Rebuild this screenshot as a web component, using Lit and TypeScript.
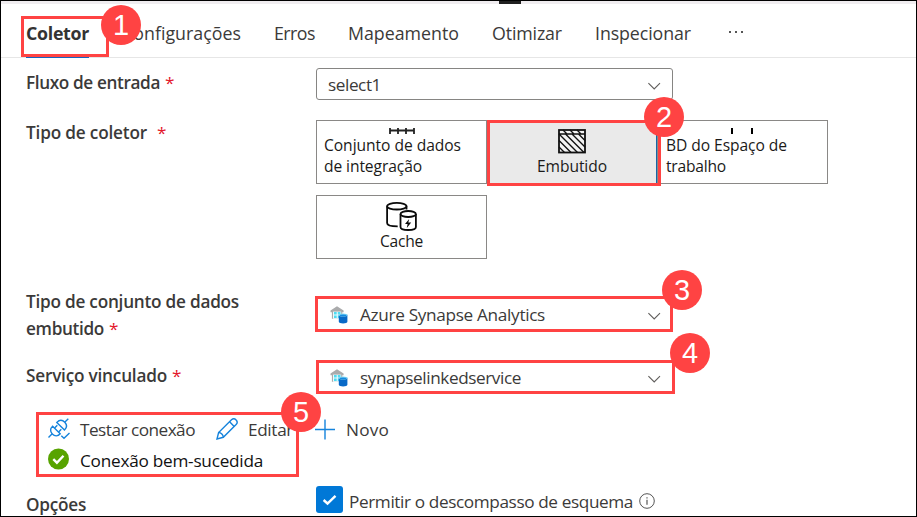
import { LitElement, html, css } from "lit";
import { customElement, property, query } from "lit/decorators.js";

/** Text run whose tracking is adjusted so that it spans a given advance width. */
@customElement("fit-text")
class FitText extends LitElement {
  @property({ type: Number }) w = 0;
  @query("span") run!: HTMLSpanElement;
  static styles = css`
    :host { display: inline-block; white-space: pre; flex: none; }
    span { display: inline-block; }
  `;
  render() {
    return html`<span><slot></slot></span>`;
  }
  firstUpdated() {
    const n = (this.textContent || "").length;
    const natural = this.run.getBoundingClientRect().width;
    if (n > 0 && this.w) this.run.style.letterSpacing = `${(this.w - natural) / n}px`;
  }
}

const chevron = html`<svg class="chevron" width="14" height="9" viewBox="0 0 14 9"><path d="M1.4 1.2L7.2 7L13 1.2" fill="none" stroke="#605e5c" stroke-width="1.1"/></svg>`;

const synapse = html`<svg class="synapse" width="18" height="18" viewBox="0 0 18 18">
  <path d="M.5 4.6L7 .3L13.6 4.6V6.3H12.3V12.8H1.9V6.3H.5Z" fill="#aaabac"/>
  <path d="M3 5.6H11.2V12.8H3Z" fill="#eefafd"/>
  <path d="M4 6H6.7V8.5H4ZM7.8 6H10.5V8.5H7.8ZM4 9.6H6.7V12.1H4ZM7.8 9.6H10.5V12.1H7.8Z" fill="#50dcf2"/>
  <path d="M8.8 8.8V15.7C8.8 18 17.4 18 17.4 15.7V8.8Z" fill="#0869c7"/>
  <ellipse cx="13.1" cy="8.9" rx="4.3" ry="1.5" fill="#83d9f5"/>
  <ellipse cx="13.1" cy="9.3" rx="3.5" ry=".9" fill="#168be1"/>
</svg>`;

const datasetIcon = html`<svg width="26" height="6" viewBox="0 0 26 6"><path d="M1 0V6M9 0V6M17 0V6M25 0V6M1 2.5H25" stroke="#222" stroke-width="1.8" fill="none"/></svg>`;

const hatchIcon = html`<svg width="28" height="25" viewBox="0 0 28 25">
  <rect x="1" y="1" width="26" height="22.5" fill="#f3f3f3" stroke="#111" stroke-width="1.8"/>
  <path d="M1 5H27M5 1L9 5M12 1L16 5M19 1L23 5M1 18L6.5 23.5M1 11.5L13 23.5M1 5L19.5 23.5M7.5 5L26 23.5M14 5L27 18M20.5 5L27 11.5" fill="none" stroke="#111" stroke-width="1.4"/>
</svg>`;

const cacheIcon = html`<svg width="31" height="29" viewBox="0 0 31 29" fill="none" stroke="#0a0a0a" stroke-width="1.8">
  <ellipse cx="10.8" cy="4.2" rx="9.7" ry="3.3"/>
  <path d="M1.1 4.2V21C1.1 23 5 24.4 11.7 24.4M20.5 4.2V7.5"/>
  <ellipse cx="22.2" cy="12" rx="7.7" ry="3"/>
  <path d="M14.5 12V25C14.5 29 29.9 29 29.9 25V12"/>
  <path d="M23.2 17L19 22H21.6L20.8 26L25.2 20.6H22.3Z" fill="#0a0a0a" stroke="none"/>
</svg>`;

const workspaceIcon = html`<svg width="22" height="6" viewBox="0 0 22 6"><path d="M1 0V6M21 0V6" stroke="#000" stroke-width="2"/></svg>`;

const plugIcon = html`<svg width="22" height="22" viewBox="0 0 22 22" fill="none" stroke="#1583dc" stroke-width="1.4">
  <path d="M.5 19.5L4.2 15.8M16.7 4.3L20.3 .7"/>
  <path d="M4.6 8.2L12.2 15.8C9.8 18.8 6.5 18.2 4.3 16C2 13.6 2 10.5 4.6 8.2Z"/>
  <path d="M8.8 4.4L16.5 12C19 9.6 19.2 6.8 16.8 4.2C14.2 1.7 11.3 1.9 8.8 4.4Z"/>
  <path d="M6.6 10L9.3 7.3M10.6 14L13.3 11.3"/>
  <path d="M13.3 17.7L16 20.3L21.5 15"/>
</svg>`;

const pencilIcon = html`<svg width="22" height="22" viewBox="0 0 22 22" fill="none" stroke="#1583dc" stroke-width="1.4">
  <path d="M1 21L2.6 14.5L15.5 1.8C17 .4 18.9 .7 20.1 1.9C21.4 3.2 21.5 5 20.1 6.5L7.3 19.3Z"/>
  <path d="M13.6 3.8L18.2 8.4M2.6 14.5C5 14.5 7.3 16.8 7.3 19.3"/>
</svg>`;

const plusIcon = html`<svg width="21" height="21" viewBox="0 0 21 21"><path d="M10 .5V20.5M0 10.5H20" stroke="#1583dc" stroke-width="1.4"/></svg>`;

const successIcon = html`<svg width="22" height="22" viewBox="0 0 22 22"><circle cx="10.5" cy="11" r="10.5" fill="#57a300"/><path d="M5.3 11.2L8.9 14.7L15.5 7.7" fill="none" stroke="#fff" stroke-width="2.4"/></svg>`;

const infoIcon = html`<svg class="info" width="16" height="16" viewBox="0 0 16 16" fill="none" stroke="#555"><circle cx="8" cy="8" r="7.3"/><path d="M8 6.8V11.7M8 4.2V5.5" stroke-width="1.2"/></svg>`;

@customElement("app-root")
class AppRoot extends LitElement {
  static styles = css`
    :host {
      display: block; position: relative; box-sizing: border-box;
      width: 917px; height: 517px; overflow: hidden;
      border: 1px solid #000; background: #fff; color: #3b3a39;
      font-family: "Open Sans", "Noto Sans", sans-serif; font-size: 17.2px;
    }
    svg { display: block; flex: none; }
    .strip { height: 3px; background: #f0edf0; display: flex; }
    .handle { width: 22px; margin-left: 498px; background: #201f1f; }
    .tabs {
      height: 53px; display: flex; gap: 33px; padding-left: 25px;
      border-bottom: 1px solid #e6e6e6; font-size: 17.8px; line-height: 58px;
    }
    .tab { height: 52px; }
    .tab.active { font-weight: 700; border-bottom: 2px solid #1664c0; color: #333; }
    .more { display: flex; gap: 4px; margin: 27px 0 0 5px; }
    .dot { width: 2px; height: 2px; background: #555; }
    .row { display: grid; grid-template-columns: 290px 1fr; padding-left: 25px; }
    .label { font-weight: 600; line-height: 25px; }
    .req { color: #e3142b; font-weight: 400; margin-left: 5px; }
    .req.far { margin-left: 10px; }
    .r1 { height: 62px; }
    .r1 .label { padding-top: 12px; }
    .r2 { height: 167px; }
    .r3 { height: 63px; }
    .r3 .label { line-height: 27px; padding-top: 1px; }
    .r4 { height: 64px; }
    .r4 .label { padding-top: 13px; }
    .field {
      display: flex; align-items: center; box-sizing: border-box;
      width: 357px; height: 32px; padding: 0 12px;
    }
    .field.outlined { border: 1px solid #868583; border-radius: 3px; margin-top: 10px; padding: 0 11px; }
    .field .chevron { margin: 5px 0 0 auto; }
    .field .synapse { margin: 1px 12px 0 0; }
    .r3 .field { margin-top: 11px; padding-left: 14px; }
    .r4 .field { margin-top: 11px; padding-left: 14px; }
    .cards { display: grid; grid-template-columns: 171px 170px 171px; row-gap: 11px; align-content: start; color: #1b1a19; font-size: 15.6px; line-height: 21px; }
    .card { box-sizing: border-box; height: 64px; border: 1px solid #8a8886; padding: 0 7px; }
    .card.center { display: flex; flex-direction: column; align-items: center; }
    .card.last { padding-left: 8px; }
    .card.selected { background: #eaeaea; border-color: #1664a8; }
    .card .bar { display: flex; justify-content: center; padding-top: 7px; height: 7px; }
    .card.last .bar { padding-right: 2px; }
    .embed { padding-top: 8px; }
    .embed svg { margin: 0 1px 2px 0; }
    .cache { padding-top: 6px; }
    .actions { display: flex; align-items: center; height: 30px; padding-left: 47px; }
    .actions svg { margin-right: 10px; }
    .actions .pencil { margin-left: 21px; display: flex; }
    .actions .plus { margin-left: 22px; display: flex; }
    .status { display: flex; align-items: center; height: 32px; padding-left: 47px; color: #111; }
    .status svg { margin: -3px 10px 0 0; }
    .r5 { padding-top: 10px; }
    .r5 .label { padding-top: 6px; }
    .option { display: flex; align-items: center; height: 27px; line-height: 27px; }
    .check { width: 27px; height: 27px; border-radius: 3px; background: #0078d7; margin-right: 6px; display: flex; flex: none; }
    .option fit-text { margin-top: 4px; }
    .option .info { margin-left: 6px; margin-top: 3px; }
    .mark { position: absolute; box-sizing: border-box; border: 3px solid #ff4343; }
    .m1 { left: 20px; top: 15px; width: 88px; height: 41px; }
    .m2 { left: 486px; top: 119px; width: 174px; height: 66px; }
    .m3 { left: 314px; top: 295px; width: 358px; height: 36px; }
    .m4 { left: 315px; top: 359px; width: 359px; height: 34px; }
    .m5 { left: 35px; top: 411px; width: 263px; height: 65px; }
    .badge {
      position: absolute; width: 40px; height: 40px; border-radius: 50%;
      background: #ff4343; color: #fff; text-align: center;
      font: 29px/41px "Liberation Sans", Arial, sans-serif;
    }
    .b1 { left: 100px; top: 4px; }
    .b2 { left: 643px; top: 96px; }
    .b3 { left: 661px; top: 269px; }
    .b4 { left: 669px; top: 332px; }
    .b5 { left: 280px; top: 391px; }
  `;

  render() {
    return html`
      <div class="strip"><div class="handle"></div></div>
      <nav class="tabs">
        <div class="tab active"><fit-text w="63">Coletor</fit-text></div>
        <div class="tab"><fit-text w="119">Configurações</fit-text></div>
        <div class="tab"><fit-text w="41">Erros</fit-text></div>
        <div class="tab"><fit-text w="111">Mapeamento</fit-text></div>
        <div class="tab"><fit-text w="70">Otimizar</fit-text></div>
        <div class="tab"><fit-text w="96">Inspecionar</fit-text></div>
        <div class="more"><div class="dot"></div><div class="dot"></div><div class="dot"></div></div>
      </nav>

      <div class="row r1">
        <div class="label"><fit-text w="134">Fluxo de entrada</fit-text><span class="req">*</span></div>
        <div class="field outlined"><fit-text w="53">select1</fit-text>${chevron}</div>
      </div>

      <div class="row r2">
        <div class="label"><fit-text w="121">Tipo de coletor</fit-text><span class="req far">*</span></div>
        <div class="cards">
          <div class="card"><div class="bar">${datasetIcon}</div><fit-text w="137">Conjunto de dados</fit-text><br><fit-text w="98">de integração</fit-text></div>
          <div class="card center selected embed">${hatchIcon}<fit-text w="70">Embutido</fit-text></div>
          <div class="card last"><div class="bar">${workspaceIcon}</div><fit-text w="121">BD do Espaço de</fit-text><br><fit-text w="60">trabalho</fit-text></div>
          <div class="card center cache">${cacheIcon}<fit-text w="43">Cache</fit-text></div>
        </div>
      </div>

      <div class="row r3">
        <div class="label"><fit-text w="213">Tipo de conjunto de dados</fit-text><br><fit-text w="78">embutido</fit-text><span class="req">*</span></div>
        <div class="field">${synapse}<fit-text w="185">Azure Synapse Analytics</fit-text>${chevron}</div>
      </div>

      <div class="row r4">
        <div class="label"><fit-text w="141">Serviço vinculado</fit-text><span class="req">*</span></div>
        <div class="field">${synapse}<fit-text w="161">synapselinkedservice</fit-text>${chevron}</div>
      </div>

      <div class="actions">
        ${plugIcon}<fit-text w="115">Testar conexão</fit-text>
        <span class="pencil">${pencilIcon}</span><fit-text w="45">Editar</fit-text>
        <span class="plus">${plusIcon}</span><fit-text w="43">Novo</fit-text>
      </div>
      <div class="status">${successIcon}<fit-text w="183">Conexão bem-sucedida</fit-text></div>

      <div class="row r5">
        <div class="label"><fit-text w="60">Opções</fit-text></div>
        <div class="option">
          <span class="check"><svg width="27" height="27" viewBox="0 0 27 27"><path d="M7.6 14L11.5 17.5L19.5 9.8" fill="none" stroke="#fff" stroke-width="2.4"/></svg></span>
          <fit-text w="284">Permitir o descompasso de esquema</fit-text>${infoIcon}
        </div>
      </div>

      ${[1, 2, 3, 4, 5].map((n) => html`<div class="mark m${n}"></div>`)}
      ${[1, 2, 3, 4, 5].map((n) => html`<div class="badge b${n}">${n}</div>`)}
    `;
  }
}
